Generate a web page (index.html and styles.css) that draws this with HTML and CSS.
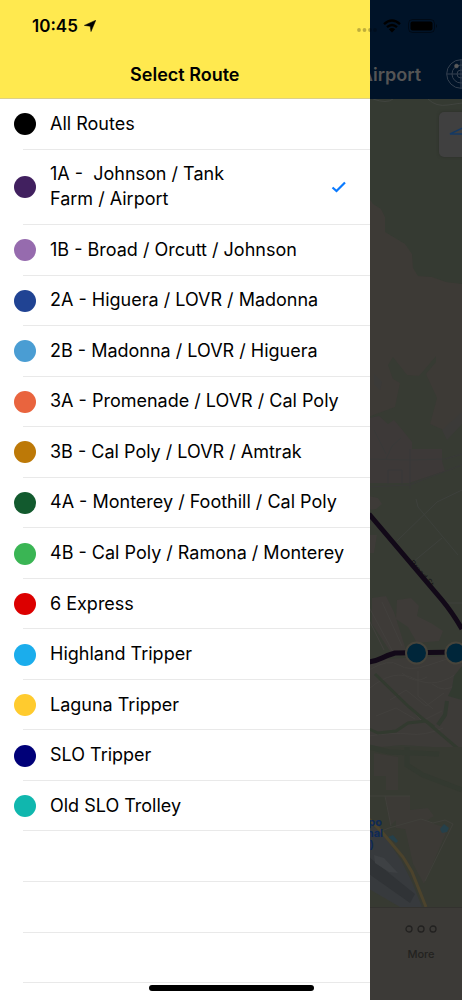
FILE: index.html
```html
<!DOCTYPE html>
<html lang="en">
<head>
<meta charset="utf-8">
<meta name="viewport" content="width=device-width, initial-scale=1">
<title>Select Route</title>
<link rel="stylesheet" href="styles.css">
</head>
<body>
<div class="app">
  <div class="screen">
    <header class="screen-header">
      <span class="screen-title">Airport</span>
      <svg class="radar" viewBox="0 0 16 32" fill="none" stroke="#354150" aria-hidden="true">
        <circle cx="15" cy="16" r="14.3"/><circle cx="15" cy="16" r="9"/><circle cx="15" cy="16" r="4"/>
        <path d="M1 16h15M15 2v28"/>
        <circle cx="10.500" cy="8" r="2" fill="#5b5b5b" stroke="#5b5b5b" stroke-width=".500"/>
      </svg>
    </header>
    <div class="map">
      <svg class="map-art" viewBox="0 99 462 808" preserveAspectRatio="xMaxYMin slice" aria-hidden="true">
        <rect y="99" width="462" height="808" fill="#373b33"/>
        <path d="M369 99h93v185l-20-2-15-5-10-1-4-6-2-11-7-12-15-10-7-4-2-18-8-6-3-6z" fill="#353a32"/>
        <path d="M373 99q14 5 20 0M428 99q8 8 20 6l14-2" fill="none" stroke="#41443f"/>
        <path d="M369 198l4 6 8 5 4 8v15l10 6 10 6 7 10 1 14 5 8 14 1 14 5 16 2v130l-14 18-18-8 7-26-11-24 10-12v-6l-17 20-12-1-14-18-5 8 5 14 7 4-5 24-27 10z" fill="#3d3a36"/>
        <path d="M369 418l10-2 9 8 6-4 10 12 8 10v7h30v12l3 10-36 12-40 0z" fill="#3d3938"/>
        <path d="M374 374l8 8-2 8-6-6zM442 430l20-18v12l-15 16z" fill="#3b3a38"/>
        <g fill="none" stroke="#393938">
          <path d="M369 459l40 1 36-1 17-5M386 459l6-13 9-8M374 430l12 24M410 449v40M388 484v-14h14v14M369 487l40-2 53-20"/>
          <path d="M416 499l2 8 40 48M397 541l40-39 25-12M413 562l29-24M443 603h19" stroke="#3e413d"/>
        </g>
        <path d="M369 496l9 2 4 6-6 5-7 1zM369 535h8l-3 18h-5zM372 598l14-2 8 16 14 44-16-2-20-30zM397 600l14-2 8 8-2 10 14 7 12 8-4 10-22 2-9-16-12-8z" fill="#3e3b38"/>
        <path d="M369 660l34-2 59-3v92l-30 0-30-2-20 2-13-2z" fill="#3d3b38"/>
        <g fill="none" stroke="#42403d">
          <path d="M369 607l8 15 16 30M369 620l15 30M382 602l20 44M369 670q20-12 30-5t30 0 33-10M370 688q24-20 45-9t47-9M402 673q13 12 25 4M418 671v25l15 13M390 700l16-10 20 16 18-13M408 707l14 14 20-10M376 716l20-8 19 11M369 736q24-4 40-2t34-6M432 684q13 10 24 0"/>
        </g>
        <path d="M447 701l-2 14-7 10" fill="none" stroke="#323a30" stroke-width="4"/>
        <path d="M462 666l-8 10-2 12-4 8 14 4z" fill="#323a30"/>
        <path d="M375 674l34 33 53 45M369 729l9 4 18-2 12-8 18-2 8 6" fill="none" stroke="#323a2f" stroke-width="3"/>
        <path d="M369 747h93v160h-93z" fill="#373a32"/>
        <path d="M407 747v18l16 10 39 15M369 747l20 5 50 2" fill="none" stroke="#333930" stroke-width="5"/>
        <path d="M374 753l24 4v33h-12v-14h-12zM385 796h25v14l18-2 6 8-22 14-16-2v-8l-6 6zM404 824l20-6 10 6 14 4-12 28-12 28-11-20z" fill="#3c3a36"/>
        <path d="M369 796h41M385 796l6 30M369 836l20-8 32-9 12 4 12-3 8 4-28 57" fill="none" stroke="#40403b"/>
        <path d="M369 824l14 9 19 29 10 20 10 25h-22l-31-18z" fill="#373a3d"/>
        <path d="M369 857l46 37-5 9-41-29z" fill="#303336"/>
        <path d="M374 855l10 3 14 15-9-1-14-9z" fill="#3e4144"/>
        <path d="M388 837l5-2 5 6-2 2zM440 829l4-5 5 4-2 4-5 1z" fill="#25404a"/>
        <path d="M369 819l13 13 21 25 9 15 14 35" fill="none" stroke="#4c432c" stroke-width="3"/>
        <g class="place"><text x="382" y="826">po</text><text x="383" y="837">nal</text><text x="374" y="848">)</text></g>
        <g class="street"><text x="409" y="563" transform="rotate(49 409 563)">Broad St</text></g>
        <path d="M369 514l73 86q10 12 20 29M369 662q7-1 13-4t13-5l67-1" fill="none" stroke="#120918" stroke-width="5"/>
        <g fill="#00263a" stroke="#47443b" stroke-width="2"><circle cx="416.500" cy="653" r="10.500"/><circle cx="456" cy="653" r="10.500"/></g>
      </svg>
      <button class="locate" aria-label="My location">
        <svg viewBox="0 0 28 22" fill="none" stroke="#143963" stroke-width="1.500" aria-hidden="true"><path d="M3 14L26 3v11z"/></svg>
      </button>
    </div>
    <nav class="tabs">
      <button class="tab">
        <svg viewBox="0 0 34 10" fill="none" stroke="#222120" stroke-width="1.300" aria-hidden="true"><circle cx="5" cy="5" r="3"/><circle cx="17" cy="5" r="3"/><circle cx="29" cy="5" r="3"/></svg>
        <span>More</span>
      </button>
    </nav>
  </div>

  <aside class="drawer">
    <header class="drawer-header"><h1>Select Route</h1></header>
    <ul class="routes">
      <li><button class="route"><i class="dot black"></i><span>All Routes</span></button></li>
      <li class="tall"><button class="route" aria-pressed="true"><i class="dot plum"></i><span>1A -&nbsp; Johnson / Tank<br>Farm / Airport</span>
        <svg class="check" viewBox="0 0 16 12" fill="none" stroke="#0a7aff" stroke-width="2.200" aria-hidden="true"><path d="M1.500 6.500L5.500 10 14 1.500"/></svg></button></li>
      <li><button class="route"><i class="dot violet"></i><span>1B - Broad / Orcutt / Johnson</span></button></li>
      <li><button class="route"><i class="dot blue"></i><span>2A - Higuera / LOVR / Madonna</span></button></li>
      <li><button class="route"><i class="dot sky"></i><span>2B - Madonna / LOVR / Higuera</span></button></li>
      <li><button class="route"><i class="dot coral"></i><span>3A - Promenade / LOVR / Cal Poly</span></button></li>
      <li><button class="route"><i class="dot amber"></i><span>3B - Cal Poly / LOVR / Amtrak</span></button></li>
      <li><button class="route"><i class="dot forest"></i><span>4A - Monterey / Foothill / Cal Poly</span></button></li>
      <li><button class="route"><i class="dot green"></i><span>4B - Cal Poly / Ramona / Monterey</span></button></li>
      <li><button class="route"><i class="dot red"></i><span>6 Express</span></button></li>
      <li><button class="route"><i class="dot cyan"></i><span>Highland Tripper</span></button></li>
      <li><button class="route"><i class="dot yellow"></i><span>Laguna Tripper</span></button></li>
      <li><button class="route"><i class="dot navy"></i><span>SLO Tripper</span></button></li>
      <li><button class="route"><i class="dot teal"></i><span>Old SLO Trolley</span></button></li>
      <li></li>
      <li></li>
      <li></li>
    </ul>
  </aside>

  <div class="status">
    <span class="time">10:45</span>
    <svg class="arrow" viewBox="0 0 12 12" aria-hidden="true"><path d="M11.800.200L7 11.600 6.200 6.200.300 5.400z" stroke="#000" stroke-width=".500" stroke-linejoin="round"/></svg>
    <svg class="signal" viewBox="0 0 20 4" fill="#000" fill-opacity=".25" aria-hidden="true"><circle cx="2" cy="2" r="1.900"/><circle cx="7.500" cy="2" r="1.900"/><circle cx="13" cy="2" r="1.900"/><circle cx="18" cy="2" r="1.900"/></svg>
    <svg class="wifi" viewBox="0 0 18 14" aria-hidden="true"><g fill="none" stroke="#000" stroke-width="2.400"><path d="M1 5.200q8-7.400 16 0M4 8.200q5-4.400 10 0"/></g><path d="M5.800 10.200q3.200-2.400 6.400 0L9 13.500z"/></svg>
    <svg class="battery" viewBox="0 0 30 14" aria-hidden="true"><rect x=".500" y=".500" width="26" height="13" rx="4" fill="none" stroke="#000" stroke-opacity=".45"/><rect x="2.500" y="2.500" width="22" height="9" rx="2"/><path d="M28 5q2 2 0 4z" fill-opacity=".5"/></svg>
  </div>
  <div class="home-bar"></div>
</div>
</body>
</html>
```
FILE: styles.css
```css
* { box-sizing: border-box; }
body {
  margin: 0;
  font-family: Inter, "Liberation Sans", sans-serif;
  color: #000;
}
button {
  border: 0;
  padding: 0;
  background: none;
  font: inherit;
  color: inherit;
}
.app {
  position: relative;
  min-height: 100vh;
  display: flex;
  overflow: hidden;
}

.screen {
  flex: 1;
  display: flex;
  flex-direction: column;
  background: #3d3b38;
}
.screen-header {
  height: 99px;
  padding-top: 49px;
  display: flex;
  align-items: center;
  justify-content: flex-end;
  gap: 25px;
  background: #001328;
  color: #555;
}
.screen-title { font-size: 18px; font-weight: 600; }
.radar { width: 16px; height: 32px; }
.map {
  position: relative;
  flex: 1;
  overflow: hidden;
}
.map-art {
  position: absolute;
  inset: 0;
  width: 100%;
  height: 100%;
}
.place {
  font-size: 11px;
  font-weight: 700;
  fill: #0e2957;
  text-anchor: end;
}
.street { font-size: 8px; fill: #171717; }
.locate {
  position: absolute;
  top: 13px;
  right: -22px;
  width: 45px;
  height: 45px;
  padding: 8px;
  display: flex;
  border-radius: 5px;
  background: #404040;
  box-shadow: 0 0 3px #2b2e28;
}
.locate svg { flex: none; width: 28px; height: 22px; }
.tabs {
  height: 93px;
  padding: 16px 24px;
  display: flex;
  justify-content: flex-end;
  border-top: 1px solid #33322f;
  background: #3c3a37;
  color: #232220;
}
.tab {
  display: flex;
  flex-direction: column;
  align-items: center;
  gap: 13px;
  font-size: 11px;
  font-weight: 500;
  line-height: 14px;
}
.tab svg { width: 34px; height: 10px; }

.drawer {
  position: absolute;
  inset: 0 auto 0 0;
  width: 80%;
  padding-bottom: 17px;
  display: flex;
  flex-direction: column;
  background: #fff;
}
.drawer-header {
  height: 99px;
  padding-top: 50px;
  display: flex;
  align-items: center;
  justify-content: center;
  border-bottom: 1px solid #dcd08a;
  background: #ffe94f;
}
h1 { margin: 0; font-size: 18px; font-weight: 600; }
.routes {
  flex: 1;
  margin: 0;
  padding: 0;
  display: flex;
  flex-direction: column;
  list-style: none;
}
.routes li {
  flex: 1 0 50px;
  display: flex;
  background: linear-gradient(#e9e9e9, #e9e9e9) 23px 100% / 100% 1px no-repeat;
}
.routes .tall { flex-basis: 75px; }
.route {
  flex: 1;
  padding: 0 23px 0 14px;
  display: flex;
  align-items: center;
  gap: 14px;
  font-size: 18px;
  line-height: 25px;
  text-align: left;
  white-space: nowrap;
}
.route span { padding-bottom: 2px; }
.dot {
  flex: none;
  width: 22px;
  height: 22px;
  border-radius: 50%;
}
.black { background: #000; }
.plum { background: #41205f; }
.violet { background: #966bae; }
.blue { background: #204393; }
.sky { background: #4a9dd3; }
.coral { background: #e9643e; }
.amber { background: #bd7907; }
.forest { background: #125a2e; }
.green { background: #3ab554; }
.red { background: #dc0000; }
.cyan { background: #1badec; }
.yellow { background: #ffcb2e; }
.navy { background: #000078; }
.teal { background: #10b7ae; }
.check { width: 16px; height: 12px; margin-left: auto; }

.status {
  position: absolute;
  inset: 15px 24px auto 32px;
  height: 22px;
  display: flex;
  align-items: center;
}
.time { font-size: 17px; font-weight: 600; }
.arrow { width: 12px; height: 12px; margin-left: 6px; }
.signal { width: 20px; height: 4px; margin: 8px 6px 0 auto; }
.wifi { width: 18px; height: 14px; margin-right: 7px; }
.battery { width: 30px; height: 14px; }
.home-bar {
  position: absolute;
  bottom: 9px;
  left: 50%;
  width: 165px;
  height: 6px;
  margin-left: -82px;
  border-radius: 3px;
  background: #000;
}
```
